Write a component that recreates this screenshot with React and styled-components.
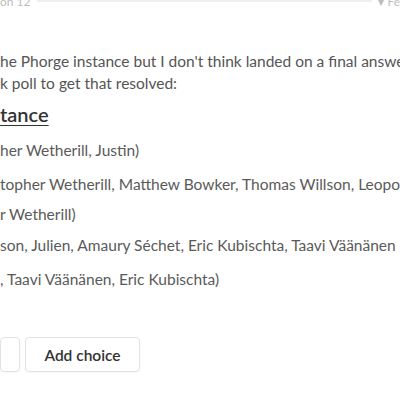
import React from 'react'
import styled, { createGlobalStyle } from 'styled-components'

const Global = createGlobalStyle`
  html, body {
    margin: 0;
    padding: 0;
    background: #fff;
    overflow: hidden;
  }
  body {
    font-family: Lato, 'Noto Sans', sans-serif;
    color: #555;
  }
`

const Page = styled.div`
  width: 400px;
  height: 400px;
  overflow: hidden;
`

const Meta = styled.div`
  display: flex;
  align-items: center;
  height: 10px;
  margin-top: -4px;
  gap: 6px;
  font-size: 12px;
  color: #bdbdbd;
  white-space: nowrap;
`

const Rule = styled.div`
  flex: 1;
  align-self: flex-start;
  height: 2px;
  margin-top: 4px;
  background: #efefef;
`

const Body = styled.div`
  padding-top: 44px;
  white-space: nowrap;
`

const Para = styled.p`
  margin: 0;
  font-size: 15.5px;
  line-height: 22px;
  color: #555;
`

const Heading = styled.h2`
  margin: 7px 0 0;
  font-size: 20px;
  line-height: 26px;
  font-weight: 600;
  color: #333;
  text-decoration: underline;
  text-underline-offset: 3px;
  text-decoration-thickness: 1px;
`

const Options = styled.ul`
  list-style: none;
  margin: 13px 0 0;
  padding: 0;
`

const Option = styled.li`
  font-size: 15.5px;
  line-height: 20px;
  color: #5a5a5a;
  margin-top: ${p => p.$gap}px;
`

const Buttons = styled.div`
  display: flex;
  gap: 5px;
  margin-top: 48px;
`

const Button = styled.button`
  height: 35px;
  width: ${p => p.$w}px;
  padding: 0;
  border: 1px solid #e2e2e2;
  border-radius: 4px;
  background: #fff;
  font-family: Lato, 'Noto Sans', sans-serif;
  font-size: 15.5px;
  font-weight: 600;
  color: #333;
  box-shadow: 0 1px 2px rgba(0, 0, 0, 0.04);
`

const options = [
  { t: 'her Wetherill, Justin)', g: 0 },
  { t: 'topher Wetherill, Matthew Bowker, Thomas Willson, Leopold', g: 14 },
  { t: 'r Wetherill)', g: 10 },
  { t: 'son, Julien, Amaury Séchet, Eric Kubischta, Taavi Väänänen', g: 11 },
  { t: ', Taavi Väänänen, Eric Kubischta)', g: 14 },
]

export default function App() {
  return (
    <Page>
      <Global />
      <Meta>
        <span>on 12</span>
        <Rule />
        <span>▾ Fe</span>
      </Meta>
      <Body>
        <Para>he Phorge instance but I don't think landed on a final answer</Para>
        <Para>k poll to get that resolved:</Para>
        <Heading>tance</Heading>
        <Options>
          {options.map(o => (
            <Option key={o.t} $gap={o.g}>{o.t}</Option>
          ))}
        </Options>
        <Buttons>
          <Button $w={20} />
          <Button $w={115}>Add choice</Button>
        </Buttons>
      </Body>
    </Page>
  )
}
